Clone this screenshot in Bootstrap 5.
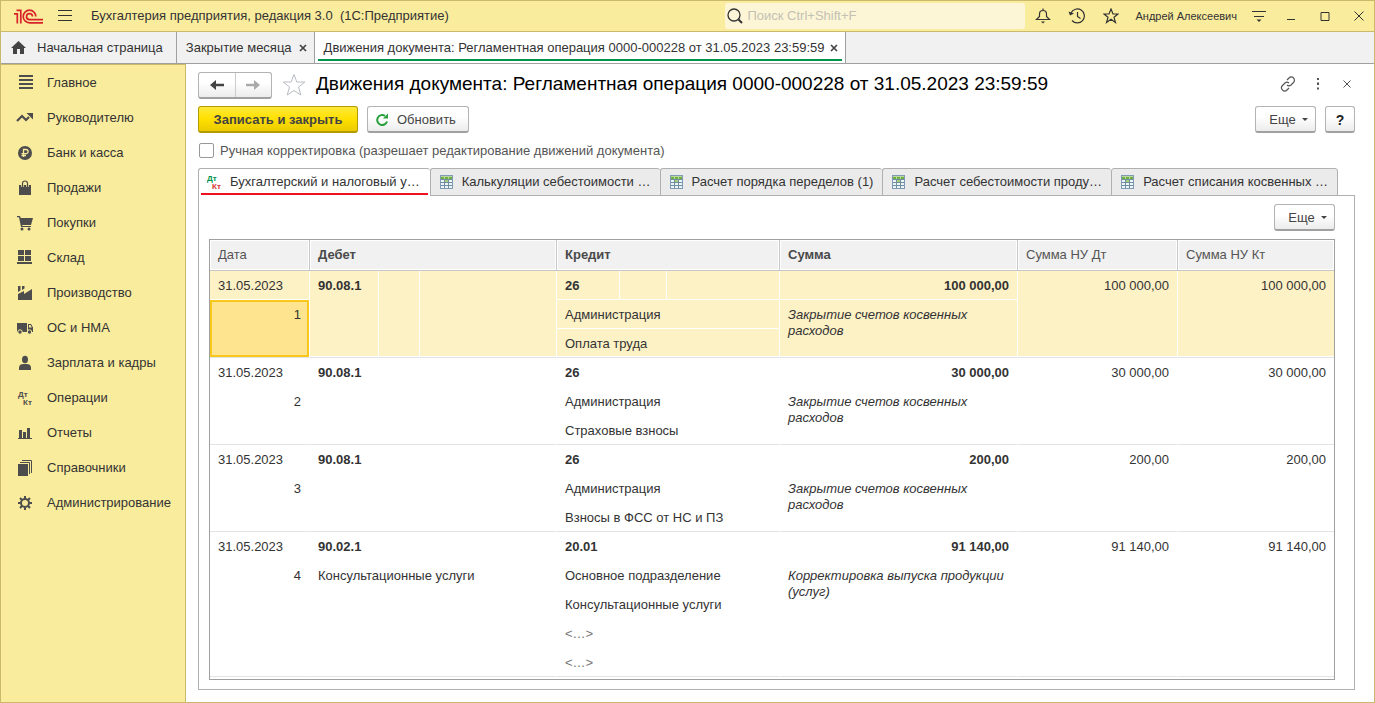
<!DOCTYPE html>
<html lang="ru">
<head>
<meta charset="utf-8">
<meta name="viewport" content="width=device-width, initial-scale=1">
<title>Бухгалтерия предприятия</title>
<link href="https://cdn.jsdelivr.net/npm/bootstrap@5.3.0/dist/css/bootstrap.min.css" rel="stylesheet">
<style>
:root { --sand:#faec9d; --sand-line:#c9b96b; --ink:#333; --grey-line:#a0a0a0; }
body { font-family:"Liberation Sans",Arial,sans-serif; font-size:13px; line-height:16px; color:var(--ink); background:#fff; }
a { color:inherit; text-decoration:none; }
svg { display:block; flex-shrink:0; }
.window { border:1px solid var(--sand-line); }
.titlebar { height:31px; background:var(--sand); border-bottom:1px solid var(--sand-line); padding-left:12px; }
.app-title { white-space:pre; margin-left:19px; }
.menu-btn { margin-left:15px; }
.flat { border:0; background:none; padding:0; color:inherit; display:flex; align-items:center; justify-content:center; }
.search { width:300px; height:26px; background:#fdf6d6; border-radius:3px; padding-left:2px; }
.search input { border:0; background:none; outline:0; padding:0; font-size:13px; width:100%; color:var(--ink); }
.search input::placeholder { color:#c3c0b4; opacity:1; }
.tools { gap:14px; padding:0 5px 0 8px; }
.user { font-size:11px; }
.win-btn { width:20px; }
.strip { height:32px; background:#f1f1f1; border-bottom:1px solid var(--grey-line); }
.strip-tab { border-right:1px solid var(--grey-line); padding:0 7px 0 9px; gap:7px; }
.strip-home { padding-right:13px; padding-left:10px; gap:11px; }
.strip-tab.active { background:#fff; position:relative; gap:5px; }
.strip-tab.active::after { content:""; position:absolute; left:3px; right:3px; bottom:2px; height:2px; background:#00934a; }
.side { width:185px; flex-shrink:0; background:var(--sand); border-top:1px solid var(--sand-line); border-right:1px solid var(--sand-line); }
.side a { height:35px; display:flex; align-items:center; gap:14px; padding-left:15px; }
.side svg { fill:#4d4d4d; }
.work { padding:8px 19px 12px 12px; min-width:0; }
h1 { font-size:19px; line-height:24px; color:#000; font-weight:400; margin:0; padding-bottom:3px; }
.form-tools { height:24px; gap:16px; align-self:flex-start; }
.close-btn { width:16px; }
.cmd { height:27px; border:1px solid #b3b3b3; border-bottom:2px solid #a0a0a0; border-radius:3px; background:linear-gradient(#fff 40%,#ececec); color:#444; font-size:13px; line-height:16px; padding:1px 10px 0; display:flex; align-items:center; justify-content:center; gap:6px; }
.cmd-main { width:160px; font-weight:700; color:#444; background:linear-gradient(#ffe93a,#ffe000 50%,#ebcb00); border-color:#b29a00; }
.cmd-refresh { padding:1px 12px 0 8px; gap:9px; }
.cmd-nav { width:74px; padding:0; gap:0; }
.cmd-nav button { flex:1; height:100%; }
.cmd-nav button + button { border-left:1px solid #ccc; }
.cmd-more { width:61px; padding:1px 0 0 6px; }
.cmd-help { width:30px; font-size:14px; font-weight:700; color:#222; padding:1px 0 0; }
.cmd-row { gap:9px; margin-top:7px; }
.more-arrow { border:3px solid transparent; border-top-color:#444; border-bottom:0; }
.manual-row { gap:6px; margin:10px 0 8px 1px; color:#555; }
.tick { appearance:none; width:15px; height:15px; border:1px solid #999; border-radius:2px; margin:0 0 1px; background:#fff; }
.tick:checked { background:#666; }
.pages { height:28px; margin:1px 0 -1px; position:relative; }
.page-tab { background:#ebebeb; border:1px solid #b0b0b0; border-right:0; border-radius:3px 3px 0 0; padding:0 9px; display:flex; align-items:center; gap:9px; color:var(--ink); white-space:nowrap; }
.page-tab:last-child { border-right:1px solid #b0b0b0; }
.page-tab.active { background:#fff; border-bottom:0; position:relative; padding:0 10px 1px 8px; gap:7px; }
.page-tab.active::after { content:""; position:absolute; left:2px; right:2px; bottom:1px; height:2px; background:#f01020; }
.panel { border:1px solid #b0b0b0; padding:8px 19px 9px 10px; }
.frame { border:1px solid var(--grey-line); min-height:0; margin-top:8px; }
.entries { width:100%; table-layout:fixed; border-collapse:separate; border-spacing:0; }
.entries th { height:31px; padding:0 8px; background:#f1f1f1; border-right:1px solid #c6c6cb; border-bottom:1px solid #c6c6cb; box-shadow:inset 0 0 0 1px #fff; font-weight:400; color:#555; }
.entries th.strong { font-weight:700; color:#4a4a4a; }
.entries td { height:29px; padding:7px 8px 5px; vertical-align:top; border-right:1px solid transparent; }
.entries tr > .edge { border-right:0; }
.entries tbody tr:last-child td, .entries td.tall { border-bottom:1px solid #e3e3e3; }
.entries .picked td { background:#fdf1c6; border-right-color:#fff; border-bottom:1px solid #fff; }
.entries .picked tr:last-child td, .entries .picked td.tall { border-bottom:1px solid #e3e3e3; box-shadow:inset 0 -1px 0 #fff; }
.entries .picked tr > .edge { border-right:0; }
.entries .picked td.current { background:#ffe48f; box-shadow:inset 0 0 0 2px #f8c81c; border-bottom-color:#e3e3e3; }
.num { text-align:right; }
.entries td.faint { color:#777; }
</style>
</head>
<body>
<svg width="0" height="0" class="position-absolute" aria-hidden="true">
  <symbol id="sheet" viewBox="0 0 13 14"><path d="M0 0h13v14H0z" fill="#7f9ab5"/><path d="M1 1h11v12H1z" fill="#6f8f9f"/><path d="M1 1h11v3H1z" fill="#b9d8a0"/><path d="M1 2h3v2H1zM5 2h3v2H5zM9 2h3v2H9z" fill="#6fb040"/><path d="M1 5h3v2H1zM5 5h3v2H5zM9 5h3v2H9zM1 8h3v2H1zM5 8h3v2H5zM9 8h3v2H9zM1 11h3v2H1zM5 11h3v2H5zM9 11h3v2H9z" fill="#edf5fb"/><path d="M5 5h3v2H5z" fill="#a4d07a"/></symbol>
  <symbol id="cross" viewBox="0 0 8 8"><path d="M1 1l6 6M7 1L1 7" stroke="#444" stroke-width="1.700"/></symbol>
</svg>
<div class="window min-vh-100 d-flex flex-column">
  <header class="titlebar d-flex align-items-center">
    <svg width="30" height="15" viewBox="-1 0 30 15" fill="none" stroke="#d8232a" stroke-width="1.700"><path d="M0 4.800H3.300V14.500M2.500 1.300H6.800V14.500M21.800 7.500A6.300 6.300 0 1 0 15.500 13.800H29M18.500 7.500A3 3 0 1 0 15.500 10.600H29"/></svg>
    <button class="flat menu-btn" aria-label="Меню"><svg width="14" height="12" stroke="#333"><path d="M0 .5h14M0 5.500h14M0 10.500h14"/></svg></button>
    <span class="app-title">Бухгалтерия предприятия, редакция 3.0  (1С:Предприятие)</span>
    <label class="search ms-auto d-flex align-items-center gap-1">
      <svg width="16" height="16" fill="none" stroke="#333" stroke-width="1.300"><circle cx="7" cy="7" r="6"/><path d="M11.500 11.500l3.500 3.500" stroke-width="2"/></svg>
      <input type="text" placeholder="Поиск Ctrl+Shift+F" aria-label="Поиск">
    </label>
    <div class="tools d-flex align-items-center">
      <button class="flat win-btn" aria-label="Уведомления"><svg width="16" height="16" fill="none" stroke="#333" stroke-width="1.200"><path d="M1.500 11.500h13L11.500 8.500V6C11.500 3.500 10 2.500 8 2.500S4.500 3.500 4.500 6v2.500zM8 .5v2"/><path d="M6 13.500h4l-2 2z" fill="#333" stroke="none"/></svg></button>
      <button class="flat win-btn" aria-label="История"><svg width="18" height="16" fill="none" stroke="#333" stroke-width="1.200"><path d="M3 5A7 7 0 1 1 4 12.500M9.500 4v4.500l3 2"/><path d="M.5 3.500l1.500 4 4-2z" fill="#333" stroke="none"/></svg></button>
      <button class="flat win-btn" aria-label="Избранное"><svg width="16" height="16" fill="none" stroke="#333" stroke-width="1.200"><path d="M8 1l2 5h5l-4 3.300 1.500 5.200L8 11.300l-4.500 3.200L5 9.300 1 6h5z"/></svg></button>
      <a href="#" class="user">Андрей Алексеевич</a>
      <button class="flat" aria-label="Настройки"><svg width="16" height="14" stroke="#333" stroke-width="1"><path d="M1 2.500h14M3 7.500h10"/><path d="M5.500 10.500h5L8 13z" fill="#333" stroke="none"/></svg></button>
      <button class="flat win-btn" aria-label="Свернуть"><svg width="10" height="10" stroke="#333"><path d="M1 8.500h8"/></svg></button>
      <button class="flat win-btn" aria-label="Развернуть"><svg width="10" height="10" stroke="#333" fill="none"><path d="M1 1.500h8v8h-8z"/></svg></button>
      <button class="flat win-btn" aria-label="Закрыть"><svg width="10" height="10" stroke="#333"><path d="M.5.5l9 9M9.500.5l-9 9"/></svg></button>
    </div>
  </header>
  <nav class="strip d-flex">
    <a href="#" class="strip-tab strip-home d-flex align-items-center"><svg width="15" height="13" fill="#444"><path d="M7.500 0L15 7h-2v6H9V8H6v5H2V7H0z"/></svg>Начальная страница</a>
    <a href="#" class="strip-tab d-flex align-items-center">Закрытие месяца<svg width="8" height="8"><use href="#cross"/></svg></a>
    <a href="#" class="strip-tab active d-flex align-items-center" aria-current="page">Движения документа: Регламентная операция 0000-000228 от 31.05.2023 23:59:59<svg width="8" height="8"><use href="#cross"/></svg></a>
  </nav>
  <div class="d-flex flex-fill">
    <nav class="side">
      <a href="#"><svg width="17" height="16"><path d="M3 0h14v2H3zM3 4h14v2H3zM3 8h14v2H3zM3 12h14v2H3z"/></svg>Главное</a>
      <a href="#"><svg width="17" height="16"><path d="M1 11l5-5 4 4 3-3" fill="none" stroke="#4d4d4d" stroke-width="2.200"/><path d="M10.500 3H17v6.500z"/></svg>Руководителю</a>
      <a href="#"><svg width="17" height="16"><circle cx="9" cy="8" r="7"/><path d="M7.500 12V4.500h2.500a2 2 0 0 1 0 4.200H5.500M5.500 10.500h4.500" fill="none" stroke="#faec9d" stroke-width="1.300"/></svg>Банк и касса</a>
      <a href="#"><svg width="17" height="16"><path d="M3 5h12v10H3z"/><path d="M6.500 7V3.500a2.500 2.500 0 0 1 5 0V7" fill="none" stroke="#faec9d" stroke-width="2.600"/><path d="M6.500 7V3.500a2.500 2.500 0 0 1 5 0V7" fill="none" stroke="#4d4d4d" stroke-width="1.200"/></svg>Продажи</a>
      <a href="#"><svg width="17" height="16"><path d="M1 1h3l.7 2H17l-2 7H6l.5 1H15v1H5L3 2.300H1z"/><circle cx="6" cy="14" r="1.500"/><circle cx="13" cy="14" r="1.500"/></svg>Покупки</a>
      <a href="#"><svg width="17" height="16"><path d="M2 0h6v5H2zM9 0h6v5H9zM2 6h6v5H2zM9 6h6v5H9zM1 12h15v2H1z"/></svg>Склад</a>
      <a href="#"><svg width="17" height="16"><path d="M2 15V9l6-3v3l8-5v11zM2 1h2.500v4.500L2 7zM6 1h2.500v2.500L6 5z"/></svg>Производство</a>
      <a href="#"><svg width="17" height="16"><path d="M1 3h10v9H1zM12 4h3l2 3.500V12h-5z"/><path d="M13 5h1.500l1.300 2.500H13z" fill="#faec9d"/><g stroke="#faec9d"><circle cx="4" cy="12" r="2.200"/><circle cx="13.500" cy="12" r="2.200"/></g></svg>ОС и НМА</a>
      <a href="#"><svg width="17" height="16"><ellipse cx="9" cy="4.500" rx="3" ry="3.800"/><path d="M3 15v-2.500C3 10 5 9 7.500 9h3c2.500 0 4.500 1 4.500 3.500V15z"/></svg>Зарплата и кадры</a>
      <a href="#"><svg width="17" height="16" font-size="8" font-weight="700"><text x="2" y="7">Дт</text><text x="7" y="15">Кт</text></svg>Операции</a>
      <a href="#"><svg width="17" height="16"><path d="M2 13h14v1H2zM3 5h3v8H3zM7 7h3v6H7zM11 3h3v10h-3z"/></svg>Отчеты</a>
      <a href="#"><svg width="17" height="16"><path d="M2 4h10v12H2z"/><path d="M4 2.500h9.500V14M6 .5h9.500V13" fill="none" stroke="#4d4d4d"/></svg>Справочники</a>
      <a href="#"><svg width="17" height="16"><g fill="none" stroke="#4d4d4d"><circle cx="9" cy="8" r="4" stroke-width="2"/><path d="M9 1v2.500M9 12.500V15M2 8h2.500M13.500 8H16M4 3l2 2M12 11l2 2M14 3l-2 2M6 11l-2 2" stroke-width="2"/></g></svg>Администрирование</a>
    </nav>
    <main class="work flex-fill d-flex flex-column">
      <div class="d-flex align-items-center">
        <div class="cmd cmd-nav">
          <button class="flat" aria-label="Назад"><svg width="14" height="10" fill="#444"><path d="M0 5l6-5v3.800h8v2.400H6V10z"/></svg></button>
          <button class="flat" aria-label="Вперед"><svg width="14" height="10" fill="#aaa"><path d="M14 5L8 0v3.800H0v2.400h8V10z"/></svg></button>
        </div>
        <button class="flat ms-2 me-2" aria-label="В избранное"><svg width="28" height="24" viewBox="-2 1 28 24" fill="none" stroke="#b8bcc4"><path d="M12 1.500l2.800 7.500h8L16.500 14l2.300 8L12 17.500 5.200 22l2.300-8L1.200 9h8z"/></svg></button>
        <h1>Движения документа: Регламентная операция 0000-000228 от 31.05.2023 23:59:59</h1>
        <div class="form-tools d-flex align-items-center ms-auto">
          <button class="flat" aria-label="Ссылка"><svg width="16" height="16" fill="none" stroke="#555" stroke-width="1.200"><path d="M7 4l2-2a3 3 0 0 1 4.500 4.500L11 9a3 3 0 0 1-4 0M9 12l-2 2A3 3 0 0 1 2.500 9.500L5 7a3 3 0 0 1 4 0"/></svg></button>
          <button class="flat" aria-label="Действия"><svg width="11" height="12" fill="#555"><path d="M5 0h2v2H5zM5 4.500h2v2.500H5zM5 9.500h2v2H5z"/></svg></button>
          <button class="flat close-btn" aria-label="Закрыть форму"><svg width="8" height="8" stroke="#555"><path d="M.5.5l7 7M7.500.5l-7 7"/></svg></button>
        </div>
      </div>
      <div class="cmd-row d-flex">
        <button class="cmd cmd-main">Записать и закрыть</button>
        <button class="cmd cmd-refresh"><svg width="12" height="13" fill="none" stroke="#27a03c" stroke-width="2"><path d="M9 2.800A5 5 0 1 0 11 8.500"/><path d="M7 5.500h5V.5z" fill="#27a03c" stroke="none"/></svg>Обновить</button>
        <button class="cmd cmd-more ms-auto">Еще<span class="more-arrow"></span></button>
        <button class="cmd cmd-help">?</button>
      </div>
      <div class="manual-row d-flex align-items-center">
        <input type="checkbox" class="tick" id="manual"><label for="manual">Ручная корректировка (разрешает редактирование движений документа)</label>
      </div>
      <div class="pages d-flex" role="tablist">
        <button class="page-tab active" role="tab" aria-selected="true"><svg width="16" height="16" font-size="8" font-weight="700"><text x="0" y="7" fill="#00934a">Дт</text><text x="5" y="15" fill="#d8352f">Кт</text></svg>Бухгалтерский и налоговый у…</button>
        <button class="page-tab" role="tab"><svg width="13" height="14"><use href="#sheet"/></svg>Калькуляции себестоимости …</button>
        <button class="page-tab" role="tab"><svg width="13" height="14"><use href="#sheet"/></svg>Расчет порядка переделов (1)</button>
        <button class="page-tab" role="tab"><svg width="13" height="14"><use href="#sheet"/></svg>Расчет себестоимости проду…</button>
        <button class="page-tab" role="tab"><svg width="13" height="14"><use href="#sheet"/></svg>Расчет списания косвенных …</button>
      </div>
      <section class="panel flex-fill d-flex flex-column">
        <button class="cmd cmd-more ms-auto">Еще<span class="more-arrow"></span></button>
        <div class="frame flex-fill">
          <table class="entries">
            <colgroup><col style="width:100px"><col style="width:69px"><col style="width:41px"><col style="width:137px"><col style="width:63px"><col style="width:47px"><col style="width:113px"><col><col style="width:160px"><col style="width:156px"></colgroup>
            <thead><tr><th>Дата</th><th class="strong" colspan="3">Дебет</th><th class="strong" colspan="3">Кредит</th><th class="strong">Сумма</th><th>Сумма НУ Дт</th><th class="edge">Сумма НУ Кт</th></tr></thead>
            <tbody class="picked">
              <tr><td>31.05.2023</td><td rowspan="3" class="tall fw-bold">90.08.1</td><td rowspan="3" class="tall"></td><td rowspan="3" class="tall"></td><td class="fw-bold">26</td><td></td><td></td><td class="num fw-bold">100 000,00</td><td rowspan="3" class="tall num">100 000,00</td><td rowspan="3" class="tall num edge">100 000,00</td></tr>
              <tr><td rowspan="2" class="num current">1</td><td colspan="3">Администрация</td><td rowspan="2" class="tall fst-italic">Закрытие счетов косвенных<br>расходов</td></tr>
              <tr><td colspan="3">Оплата труда</td></tr>
            </tbody>
            <tbody>
              <tr><td>31.05.2023</td><td colspan="3" rowspan="3" class="tall fw-bold">90.08.1</td><td colspan="3" class="fw-bold">26</td><td class="num fw-bold">30 000,00</td><td rowspan="3" class="tall num">30 000,00</td><td rowspan="3" class="tall num edge">30 000,00</td></tr>
              <tr><td rowspan="2" class="tall num">2</td><td colspan="3">Администрация</td><td rowspan="2" class="tall fst-italic">Закрытие счетов косвенных<br>расходов</td></tr>
              <tr><td colspan="3">Страховые взносы</td></tr>
            </tbody>
            <tbody>
              <tr><td>31.05.2023</td><td colspan="3" rowspan="3" class="tall fw-bold">90.08.1</td><td colspan="3" class="fw-bold">26</td><td class="num fw-bold">200,00</td><td rowspan="3" class="tall num">200,00</td><td rowspan="3" class="tall num edge">200,00</td></tr>
              <tr><td rowspan="2" class="tall num">3</td><td colspan="3">Администрация</td><td rowspan="2" class="tall fst-italic">Закрытие счетов косвенных<br>расходов</td></tr>
              <tr><td colspan="3">Взносы в ФСС от НС и ПЗ</td></tr>
            </tbody>
            <tbody>
              <tr><td>31.05.2023</td><td colspan="3" class="fw-bold">90.02.1</td><td colspan="3" class="fw-bold">20.01</td><td class="num fw-bold">91 140,00</td><td rowspan="5" class="tall num">91 140,00</td><td rowspan="5" class="tall num edge">91 140,00</td></tr>
              <tr><td rowspan="4" class="tall num">4</td><td colspan="3" rowspan="4" class="tall">Консультационные услуги</td><td colspan="3">Основное подразделение</td><td rowspan="4" class="tall fst-italic">Корректировка выпуска продукции (услуг)</td></tr>
              <tr><td colspan="3">Консультационные услуги</td></tr>
              <tr><td colspan="3" class="faint">&lt;…&gt;</td></tr>
              <tr><td colspan="3" class="faint">&lt;…&gt;</td></tr>
            </tbody>
          </table>
        </div>
      </section>
    </main>
  </div>
</div>
<script src="https://cdn.jsdelivr.net/npm/bootstrap@5.3.0/dist/js/bootstrap.bundle.min.js"></script>
</body>
</html>
